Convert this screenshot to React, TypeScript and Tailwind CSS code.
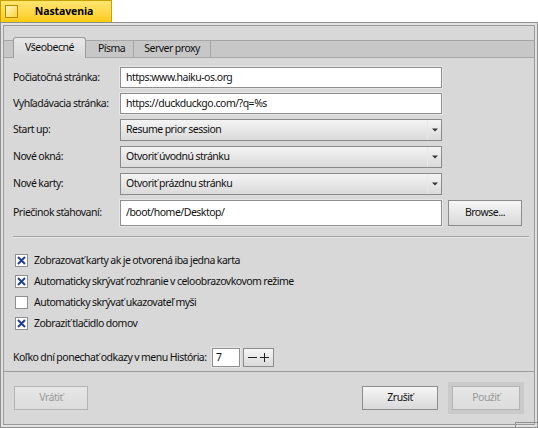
const txt = "text-[10.5px] tracking-[-0.5px] [word-spacing:-0.3px]";

function TextBox({ value, className = "" }: { value: string; className?: string }) {
  return (
    <div
      className={`flex items-center bg-white border border-[#8e8e8e] shadow-[0_0_0_1px_#e6e6e6] pl-[5px] text-[#111] ${className}`}
    >
      <span className="whitespace-nowrap">{value}</span>
    </div>
  );
}

function Dropdown({ value }: { value: string }) {
  return (
    <div className="h-[22px] flex border border-[#8a8a8a] bg-gradient-to-b from-[#f4f4f4] to-[#dadada]">
      <div className="flex-1 flex items-center pl-[5px] text-[#111] whitespace-nowrap">{value}</div>
      <div className="w-[14px] flex items-center justify-center border-l border-[#e8e8e8]">
        <svg width="6" height="4" viewBox="0 0 6 4">
          <path d="M0 0.5h6L3 3.5z" fill="#333" />
        </svg>
      </div>
    </div>
  );
}

function Button({
  label,
  disabled = false,
  className = "",
}: {
  label: string;
  disabled?: boolean;
  className?: string;
}) {
  return (
    <div
      className={`h-[24px] flex items-center justify-center border bg-gradient-to-b ${
        disabled
          ? "border-[#b4b4b4] from-[#e6e6e6] to-[#dcdcdc] text-[#9a9a9a]"
          : "border-[#8c8c8c] from-[#f6f6f6] to-[#d9d9d9] text-[#111]"
      } ${className}`}
    >
      {label}
    </div>
  );
}

function Check({ checked, label }: { checked: boolean; label: string }) {
  return (
    <div className="h-[21px] flex items-center gap-[6px]">
      <div className="w-[13px] h-[13px] bg-white border border-[#8e8e8e] flex items-center justify-center">
        {checked && (
          <svg width="9" height="9" viewBox="0 0 9 9">
            <path d="M1 1L8 8M8 1L1 8" stroke="#1f3f94" strokeWidth="2" />
          </svg>
        )}
      </div>
      <span className="whitespace-nowrap text-[#111]">{label}</span>
    </div>
  );
}

export default function App() {
  const rows: [string, string, "input" | "select"][] = [
    ["Počiatočná stránka:", "https:www.haiku-os.org", "input"],
    ["Vyhľadávacia stránka:", "https://duckduckgo.com/?q=%s", "input"],
    ["Start up:", "Resume prior session", "select"],
    ["Nové okná:", "Otvoriť úvodnú stránku", "select"],
    ["Nové karty:", "Otvoriť prázdnu stránku", "select"],
  ];

  return (
    <div
      className={`w-[538px] h-[428px] bg-white flex flex-col font-['Noto_Sans',sans-serif] ${txt}`}
    >
      {/* window tab */}
      <div className="h-[22px] flex">
        <div className="w-[112px] relative flex items-center border border-b-0 border-[#c9a100] bg-gradient-to-b from-[#ffe66e] to-[#ffcb00]">
          <div className="absolute left-[4px] top-[4px] w-[13px] h-[13px] border border-[#b18c00] bg-gradient-to-br from-[#fff6c4] to-[#ffd21a]" />
          <span className="flex-1 text-center pl-[16px] font-bold text-black text-[10.5px] tracking-[-0.1px]">
            Nastavenia
          </span>
        </div>
      </div>

      {/* window frame */}
      <div className="relative flex-1 flex flex-col border border-[#8f8f8f] bg-[#e2e2e2] p-[2px]">
        <div className="flex-1 flex flex-col border border-[#9a9a9a] bg-[#d8d8d8]">
          {/* tab view */}
          <div className="flex flex-col h-[346px] border-b border-[#9c9c9c]">
            <div className="h-[14px]" />
            <div className="h-[18px] flex items-end bg-[#c7c7c7] border-y border-[#a6a6a6] pl-[9px]">
              <div className="h-[21px] -mb-px px-[11px] flex items-center bg-gradient-to-b from-[#e8e8e8] to-[#d8d8d8] border border-b-0 border-[#9c9c9c] rounded-t-[3px] text-[#111]">
                Všeobecné
              </div>
              <div className="h-full pl-[12px] pr-[8px] flex items-center border-r border-[#a6a6a6] text-[#111]">
                Písma
              </div>
              <div className="h-full px-[10px] flex items-center border-r border-[#a6a6a6] text-[#111]">
                Server proxy
              </div>
            </div>

            <div className="pl-[9px] pr-[10px] pt-[9px] flex flex-col">
              <div className="grid grid-cols-[101px_322px_74px] gap-x-[6px] gap-y-[5px]">
                {rows.map(([label, value, kind]) => (
                  <div key={label} className="contents">
                    <div className="flex items-center text-[#111] whitespace-nowrap">{label}</div>
                    {kind === "input" ? (
                      <TextBox value={value} className="h-[21px]" />
                    ) : (
                      <Dropdown value={value} />
                    )}
                    <div />
                  </div>
                ))}
                <div className="flex items-center text-[#111] whitespace-nowrap">Priečinok sťahovaní:</div>
                <TextBox value="/boot/home/Desktop/" className="h-[26px]" />
                <Button label="Browse..." className="h-[26px]" />
              </div>

              <div className="mt-[10px] mr-[-5px] h-px bg-[#a0a0a0] shadow-[0_1px_0_#ececec]" />

              <div className="mt-[13px] pl-[2px] flex flex-col">
                <Check checked label="Zobrazovať karty ak je otvorená iba jedna karta" />
                <Check checked label="Automaticky skrývať rozhranie v celoobrazovkovom režime" />
                <Check checked={false} label="Automaticky skrývať ukazovateľ myši" />
                <Check checked label="Zobraziť tlačidlo domov" />
              </div>

              <div className="mt-[14px] flex items-center h-[19px]">
                <span className="text-[#111] whitespace-nowrap w-[199px]">
                  Koľko dní ponechať odkazy v menu História:
                </span>
                <TextBox value="7" className="h-[19px] w-[28px] !pl-[3px]" />
                <div className="ml-[3px] h-[19px] w-[31px] flex items-center justify-center gap-[3px] border border-[#8c8c8c] bg-gradient-to-b from-[#f6f6f6] to-[#d9d9d9]">
                  <svg width="9" height="9" viewBox="0 0 9 9">
                    <path d="M0 4.5h9" stroke="#222" strokeWidth="1" />
                  </svg>
                  <svg width="9" height="9" viewBox="0 0 9 9">
                    <path d="M0 4.5h9M4.5 0v9" stroke="#222" strokeWidth="1" />
                  </svg>
                </div>
              </div>
            </div>
          </div>

          {/* bottom buttons */}
          <div className="flex-1 flex items-center pl-[10px] pr-[10px]">
            <Button label="Vrátiť" disabled className="w-[74px]" />
            <div className="flex-1" />
            <Button label="Zrušiť" className="w-[76px]" />
            <div className="ml-[10px] w-[76px] h-[32px] bg-[#cacaca] p-[4px]">
              <Button label="Použiť" disabled className="h-full w-full" />
            </div>
          </div>
        </div>
        {/* resize corner notch */}
        <div className="absolute right-[-1px] bottom-[-1px] w-[23px] h-[6px] border-l border-t border-[#8f8f8f]" />
      </div>
    </div>
  );
}
